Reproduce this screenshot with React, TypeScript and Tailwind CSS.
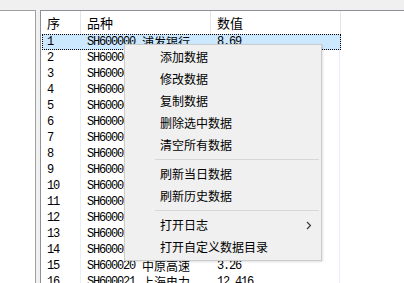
const rows = [
  ["1", "SH600000", "浦发银行", "8.69"],
  ["2", "SH600004", "白云机场", "12.35"],
  ["3", "SH600006", "东风汽车", "4.72"],
  ["4", "SH600007", "中国国贸", "16.80"],
  ["5", "SH600008", "首创股份", "3.15"],
  ["6", "SH600009", "上海机场", "35.21"],
  ["7", "SH600010", "包钢股份", "1.62"],
  ["8", "SH600011", "华能国际", "6.48"],
  ["9", "SH600012", "皖通高速", "9.87"],
  ["10", "SH600015", "华夏银行", "6.02"],
  ["11", "SH600016", "民生银行", "3.71"],
  ["12", "SH600017", "日照港", "2.86"],
  ["13", "SH600018", "上港集团", "5.13"],
  ["14", "SH600019", "宝钢股份", "6.37"],
  ["15", "SH600020", "中原高速", "3.26"],
  ["16", "SH600021", "上海电力", "12.416"],
];

const menu: (string | null)[] = [
  "添加数据",
  "修改数据",
  "复制数据",
  "删除选中数据",
  "清空所有数据",
  null,
  "刷新当日数据",
  "刷新历史数据",
  null,
  "打开日志",
  "打开自定义数据目录",
];

const App = () => {
  return (
    <div className="relative w-[404px] h-[283px] overflow-hidden bg-[#f0f0f0] flex flex-col font-['Noto_Sans_CJK_SC',sans-serif] text-black">
      {/* top strip */}
      <div className="h-[10px] shrink-0" />

      <div className="flex flex-1 min-h-0">
        {/* left panel */}
        <div className="w-[36px] bg-white border-t border-r border-[#a0a0a0]" />
        <div className="w-[4px]" />

        {/* list view */}
        <div className="flex-1 bg-white border-t border-l border-[#8e8f98] overflow-hidden">
          {/* header */}
          <div className="flex h-[23px] items-center text-[13px]">
            <div className="w-[40px] h-full pl-[6px] flex items-center border-r border-[#e5e5e5]">序</div>
            <div className="w-[130px] h-full pl-[6px] flex items-center border-r border-[#e5e5e5]">品种</div>
            <div className="w-[130px] h-full pl-[6px] flex items-center border-r border-[#e5e5e5]">数值</div>
          </div>

          {/* rows */}
          {rows.map(([no, code, name, value], i) => {
            const selected = i === 0;
            return (
              <div
                key={no}
                className={
                  selected
                    ? "flex h-[16px] items-center ml-[1px] w-[299px] bg-[#cce8ff] outline-1 outline-dotted outline-black -outline-offset-1 text-[12px]"
                    : "flex h-[16px] items-center ml-[1px] w-[299px] text-[12px]"
                }
              >
                <div
                  className={
                    selected
                      ? "w-[39px] h-full pl-[5px] flex items-center font-['Liberation_Mono',monospace] tracking-[-1.2px]"
                      : "w-[39px] h-full pl-[5px] flex items-center border-r border-[#e8eef7] font-['Liberation_Mono',monospace] tracking-[-1.2px]"
                  }
                >
                  {no}
                </div>
                <div className="w-[130px] h-full pl-[6px] flex items-center whitespace-nowrap">
                  <span className="font-['Liberation_Mono',monospace] tracking-[-1.2px]">{code}</span>
                  <span className="ml-[7px]">{name}</span>
                </div>
                <div
                  className={
                    selected
                      ? "w-[129px] h-full pl-[6px] flex items-center font-['Liberation_Mono',monospace] tracking-[-1.2px]"
                      : "w-[129px] h-full pl-[6px] flex items-center border-r border-[#e8eef7] font-['Liberation_Mono',monospace] tracking-[-1.2px]"
                  }
                >
                  {value}
                </div>
              </div>
            );
          })}
        </div>
      </div>

      {/* context menu */}
      <div className="absolute left-[124px] top-[44px] w-[198px] bg-[#f0f0f0] border border-[#cccccc] pt-[1px] pb-[2px] text-[12px] shadow-[1px_1px_2px_rgba(0,0,0,0.12)]">
        {menu.map((item, i) =>
          item === null ? (
            <div key={i} className="h-[7px] flex items-center pl-[30px] pr-[2px]">
              <div className="h-px w-full bg-[#d7d7d7]" />
            </div>
          ) : (
            <div key={i} className="relative h-[22px] flex items-center pl-[35px]">
              {item}
              {item === "打开日志" && (
                <svg className="absolute left-[181px] top-[7px]" width="6" height="9" viewBox="0 0 6 9">
                  <polyline points="1,1 4.5,4.5 1,8" fill="none" stroke="#333" strokeWidth="1.1" />
                </svg>
              )}
            </div>
          )
        )}
      </div>
    </div>
  );
};

export default App;
